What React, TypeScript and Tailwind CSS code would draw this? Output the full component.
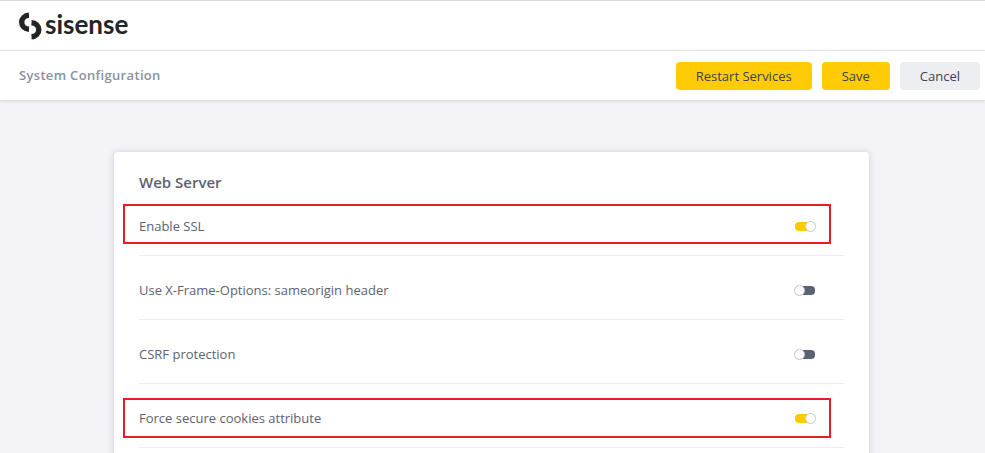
import { useState } from "react";

type Setting = { id: string; label: string; enabled: boolean; highlight?: string };

const settings: Setting[] = [
  { id: "ssl", label: "Enable SSL", enabled: true, highlight: "top-3" },
  { id: "xframe", label: "Use X-Frame-Options: sameorigin header", enabled: false },
  { id: "csrf", label: "CSRF protection", enabled: false },
  { id: "cookies", label: "Force secure cookies attribute", enabled: true, highlight: "top-[14px]" },
];

function Logo() {
  return (
    <a href="#" className="flex items-start gap-[3px] text-[#222524]">
      <svg width="23" height="28" viewBox="0 0 23 28" fill="none" stroke="currentColor" strokeWidth="5.4" aria-hidden="true">
        <path d="M10 3.2C5.8 3.4 2.7 6.4 2.7 10.2S5.8 17 10 17.2" />
        <path d="M12.5 10.8C16.8 11 19.8 14 19.8 17.8S16.8 24.6 12.5 24.8" />
      </svg>
      <span className="font-[Lato,sans-serif] text-[26px] leading-6 font-bold">sisense</span>
    </a>
  );
}

function Toggle({ id, initial }: { id: string; initial: boolean }) {
  const [on, setOn] = useState(initial);
  return (
    <input
      id={id}
      type="checkbox"
      checked={on}
      onChange={(e) => setOn(e.target.checked)}
      className="relative h-[11px] w-[22px] shrink-0 cursor-pointer appearance-none before:absolute before:inset-x-px before:inset-y-px before:rounded-[4px] before:bg-[#5b6372] after:absolute after:top-0 after:left-0 after:size-[11px] after:rounded-full after:border after:border-[#c4c6cc] after:bg-white checked:before:bg-[#ffcb05] checked:after:left-[11px]"
    />
  );
}

export default function App() {
  return (
    <div className="flex h-screen flex-col bg-[#f3f3f8] font-['Open_Sans',sans-serif] text-[13px] text-[#5b6372]">
      <header className="flex h-[51px] shrink-0 items-center border-t border-b border-t-[#d9d9df] border-b-[#ececef] bg-white px-[19px]">
        <Logo />
      </header>
      <div className="z-10 flex h-[49px] shrink-0 items-center justify-between bg-white pr-[5px] pl-[19px] shadow-[0_1px_4px_rgba(90,90,120,0.2)]">
        <h1 className="font-semibold tracking-wide text-[#8b90a0]">System Configuration</h1>
        <div className="flex gap-[10px] leading-5 text-[#3a4356]">
          <button className="h-7 rounded bg-[#ffcb05] px-5 pt-px">Restart Services</button>
          <button className="h-7 rounded bg-[#ffcb05] px-5 pt-px">Save</button>
          <button className="h-7 rounded bg-[#edeef1] px-5 pt-px">Cancel</button>
        </div>
      </div>
      <main className="min-h-0 flex-1 overflow-y-auto pt-[52px] pr-[116px] pl-[114px] [scrollbar-width:none]">
        <section className="rounded bg-white px-[25px] pb-10 shadow-[0_0_6px_rgba(90,90,110,0.25)]">
          <h2 className="pt-5 text-[15px] leading-5 font-semibold">Web Server</h2>
          <ul>
            {settings.map((s) => (
              <li key={s.id} className="relative flex h-16 items-center justify-between border-b border-[#ececef] pt-[5px] pr-7">
                <label htmlFor={s.id} className="leading-5">{s.label}</label>
                <Toggle id={s.id} initial={s.enabled} />
                {s.highlight && (
                  <div className={`pointer-events-none absolute right-[13px] -left-4 h-10 border-2 border-[#ed1c24] ${s.highlight}`} />
                )}
              </li>
            ))}
          </ul>
        </section>
      </main>
    </div>
  );
}
